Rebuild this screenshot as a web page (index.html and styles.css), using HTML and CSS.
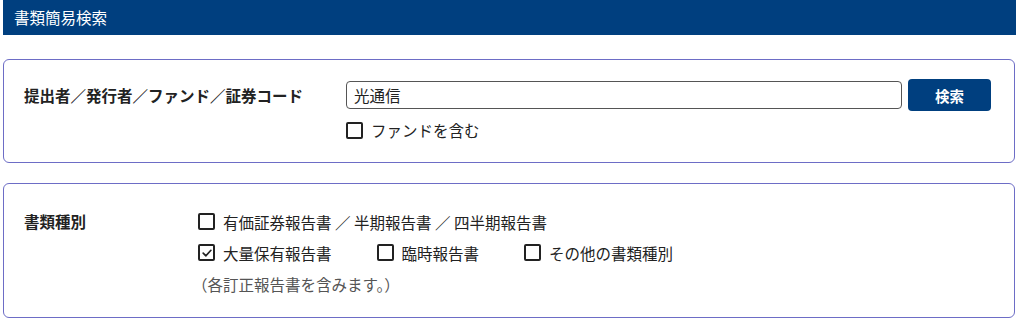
FILE: index.html
```html
<!DOCTYPE html>
<html lang="ja">
<head>
<meta charset="utf-8">
<title>書類簡易検索</title>
<link rel="stylesheet" href="styles.css">
</head>
<body>
<div class="page">
  <div class="titlebar">書類簡易検索</div>

  <section class="panel panel-search">
    <div class="label label-wide">提出者／発行者／ファンド／証券コード</div>
    <div class="field">
      <div class="search-row">
        <div class="input">光通信</div>
        <button class="btn" type="button">検索</button>
      </div>
      <label class="check"><span class="box"></span><span>ファンドを含む</span></label>
    </div>
  </section>

  <section class="panel panel-kind">
    <div class="label label-narrow">書類種別</div>
    <div class="field">
      <div class="line">
        <label class="check"><span class="box"></span><span>有価証券報告書 ／ 半期報告書 ／ 四半期報告書</span></label>
      </div>
      <div class="line">
        <label class="check item"><span class="box checked"><svg viewBox="0 0 12 12" width="12" height="12"><path d="M2.2 6.2 L4.9 8.8 L9.9 3.3" fill="none" stroke="#222" stroke-width="1.7" stroke-linecap="round" stroke-linejoin="round"/></svg></span><span>大量保有報告書</span></label>
        <label class="check item"><span class="box"></span><span>臨時報告書</span></label>
        <label class="check item"><span class="box"></span><span>その他の書類種別</span></label>
      </div>
      <div class="line note">（各訂正報告書を含みます。）</div>
    </div>
  </section>
</div>
</body>
</html>
```

FILE: styles.css
```css
* { box-sizing: border-box; }
html, body { margin: 0; padding: 0; background: #fff; }
body {
  font-family: "Noto Sans CJK JP", "Noto Sans", sans-serif;
  font-size: 15.5px;
  color: #222;
}
.page {
  margin-left: 3px;
  width: 1013px;
}
.titlebar {
  height: 35px;
  background: #003f7f;
  color: #fff;
  padding-left: 11px;
  line-height: 35px;
  font-size: 15.5px;
}
.panel {
  display: flex;
  border: 1px solid #6d6dc6;
  border-radius: 6px;
  margin-right: 1px;
  padding-left: 20px;
  padding-right: 20px;
}
.panel-search {
  margin-top: 24px;
  height: 104px;
  padding-top: 19px;
}
.panel-kind {
  margin-top: 20px;
  height: 135px;
  padding-top: 22px;
}
.label {
  font-weight: bold;
  flex: none;
}
.label-wide { width: 322px; line-height: 32px; }
.label-narrow { width: 174px; line-height: 31px; }
.field { flex: 1; }
.search-row {
  display: flex;
  align-items: center;
  gap: 6px;
  height: 32px;
}
.input {
  width: 556px;
  height: 28px;
  border: 1px solid #555;
  border-radius: 4px;
  padding-left: 7px;
  line-height: 26px;
  color: #222;
}
.btn {
  width: 83px;
  height: 32px;
  border: none;
  border-radius: 4px;
  background: #003f7f;
  color: #fff;
  font-family: inherit;
  font-size: 14.5px;
  font-weight: bold;
  padding: 0;
}
.panel-search .check {
  margin-top: 8px;
  height: 22px;
}
.check {
  display: inline-flex;
  align-items: center;
  gap: 8px;
}
.box {
  width: 17px;
  height: 17px;
  border: 2px solid #222;
  border-radius: 2px;
  display: inline-flex;
  align-items: center;
  justify-content: center;
  flex: none;
}
.box svg { display: block; }
.line {
  height: 31px;
  display: flex;
  align-items: center;
}
.item { margin-right: 45px; }
.note {
  color: #555;
  margin-left: -6px;
}
```
